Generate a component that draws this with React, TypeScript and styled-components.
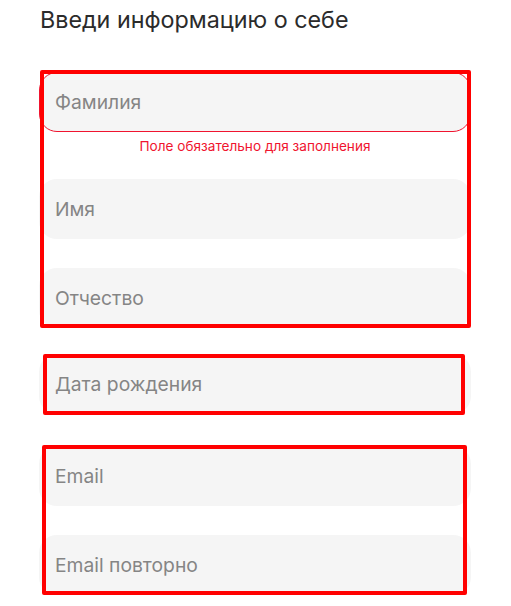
import React from "react";
import styled, { createGlobalStyle } from "styled-components";

const GlobalStyle = createGlobalStyle`
  html, body {
    margin: 0;
    padding: 0;
    background: #ffffff;
  }
  body {
    font-family: "Inter", "Noto Sans", sans-serif;
  }
  * { box-sizing: border-box; }
`;

const Page = styled.div`
  width: 432px;
  margin-left: 39px;
  padding-top: 5px;
`;

const Title = styled.h1`
  font-size: 23.3px;
  font-weight: 400;
  color: #2b2b2b;
  margin: 0 0 37px 1px;
  line-height: 30px;
`;

const Group = styled.div<{ $gap?: number }>`
  position: relative;
  display: flex;
  flex-direction: column;
  margin-bottom: ${(p) => p.$gap ?? 0}px;
`;

const Highlight = styled.div<{ $top: number; $right: number; $bottom: number; $left: number }>`
  position: absolute;
  top: ${(p) => p.$top}px;
  right: ${(p) => p.$right}px;
  bottom: ${(p) => p.$bottom}px;
  left: ${(p) => p.$left}px;
  border: 4px solid #ff0000;
  border-radius: 2px;
  pointer-events: none;
`;

const Field = styled.input<{ $error?: boolean; $space?: number }>`
  display: block;
  width: 100%;
  height: 60px;
  padding: 0 15px;
  border-radius: 18px;
  border: 1px solid ${(p) => (p.$error ? "#f0142f" : "transparent")};
  background: #f5f5f5;
  font-family: "Inter", "Noto Sans", sans-serif;
  font-size: 19.3px;
  color: #2b2b2b;
  outline: none;
  margin-bottom: ${(p) => p.$space ?? 0}px;
  &::placeholder { color: #858585; }
`;

const ErrorText = styled.div`
  text-align: center;
  font-size: 13.6px;
  line-height: 16px;
  color: #f0142f;
  margin: 6px 0 25px;
`;

export default function App() {
  return (
    <>
      <GlobalStyle />
      <Page>
        <Title>Введи информацию о себе</Title>

        <Group $gap={26}>
          <Field $error placeholder="Фамилия" />
          <ErrorText>Поле обязательно для заполнения</ErrorText>
          <Field placeholder="Имя" $space={29} />
          <Field placeholder="Отчество" />
          <Highlight $top={-2} $right={0} $bottom={0} $left={1} />
        </Group>

        <Group $gap={32}>
          <Field placeholder="Дата рождения" />
          <Highlight $top={0} $right={6} $bottom={-1} $left={4} />
        </Group>

        <Group>
          <Field placeholder="Email" $space={29} />
          <Field placeholder="Email повторно" />
          <Highlight $top={-1} $right={4} $bottom={0} $left={3} />
        </Group>
      </Page>
    </>
  );
}
